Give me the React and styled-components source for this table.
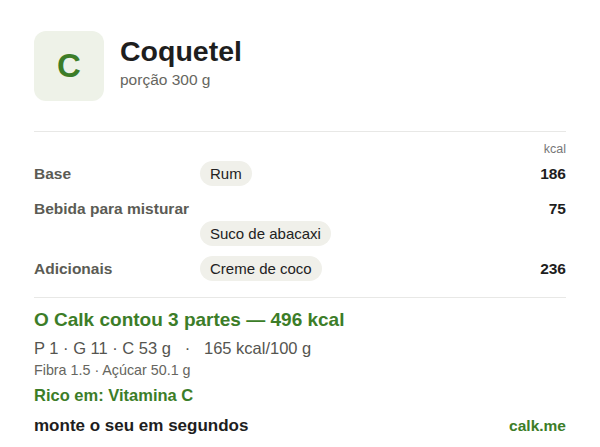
import React from 'react'
import styled, { createGlobalStyle } from 'styled-components';

const Global = createGlobalStyle`
    body {
        margin: 0;
        background: #ffffff;
        font-family: "Liberation Sans", Arial, sans-serif;
    }
`
const Card = styled.div`
    width: 600px;
    height: 447px;
    box-sizing: border-box;
    padding: 31px 34px 0 34px;
    overflow: hidden;
`
const Header = styled.div`
    display: flex;
    align-items: center;
    gap: 16px;
    padding-bottom: 30px;
    border-bottom: 1px solid #e8e8e6;
`
const Avatar = styled.div`
    width: 70px;
    height: 70px;
    border-radius: 12px;
    background: #eef2e8;
    color: #3c7d28;
    font-size: 33px;
    font-weight: bold;
    display: flex;
    align-items: center;
    justify-content: center;
`
const TitleBox = styled.div`
    display: flex;
    flex-direction: column;
    margin-top: -8px;
`
const Title = styled.div`
    font-size: 28.5px;
    font-weight: bold;
    color: #1e1e1e;
    line-height: 32px;
`
const Subtitle = styled.div`
    font-size: 15.5px;
    color: #666660;
    line-height: 18px;
    margin-top: 4px;
`
const Table = styled.div`
    display: flex;
    flex-direction: column;
    gap: 10px;
    padding: 10px 0 16px 0;
    border-bottom: 1px solid #e8e8e6;
`
const UnitHead = styled.div`
    text-align: right;
    font-size: 12.5px;
    color: #777;
    line-height: 14px;
    margin-bottom: -5px;
`
const Group = styled.div`
    display: flex;
    flex-direction: column;
`
const Row = styled.div`
    display: grid;
    grid-template-columns: 166px 1fr auto;
    align-items: center;
    height: 25px;
`
const Label = styled.div`
    font-size: 15.5px;
    font-weight: bold;
    color: #5b5b54;
`
const Chip = styled.span`
    justify-self: start;
    background: #f0f0ea;
    color: #222;
    font-size: 15px;
    height: 25px;
    line-height: 25px;
    padding: 0 10px;
    border-radius: 13px;
`
const Value = styled.div`
    font-size: 15.5px;
    font-weight: bold;
    color: #1e1e1e;
`
const Summary = styled.div`
    padding-top: 10px;
    display: flex;
    flex-direction: column;
`
const Total = styled.div`
    font-size: 19px;
    font-weight: bold;
    color: #3c7d28;
    line-height: 23px;
`
const Macros = styled.div`
    font-size: 16.5px;
    color: #555550;
    line-height: 20px;
    margin-top: 7px;
    white-space: pre;
`
const Extra = styled.div`
    font-size: 14.3px;
    color: #666660;
    line-height: 16px;
    margin-top: 4px;
`
const Rich = styled.div`
    font-size: 16.5px;
    font-weight: bold;
    color: #3c7d28;
    line-height: 20px;
    margin-top: 7px;
`
const Footer = styled.div`
    display: flex;
    justify-content: space-between;
    align-items: center;
    line-height: 20px;
    margin-top: 11px;
`
const Cta = styled.div`
    font-size: 17px;
    font-weight: bold;
    color: #1e1e1e;
`
const Brand = styled.div`
    font-size: 15.5px;
    font-weight: bold;
    color: #3c7d28;
`

const rows = [
  { label: 'Base', items: ['Rum'], kcal: 186 },
  { label: 'Bebida para misturar', items: ['Suco de abacaxi'], kcal: 75, wrap: true },
  { label: 'Adicionais', items: ['Creme de coco'], kcal: 236 },
]

function App() {
  return (
    <Card>
        <Global />
        <Header>
            <Avatar>C</Avatar>
            <TitleBox>
                <Title>Coquetel</Title>
                <Subtitle>porção 300 g</Subtitle>
            </TitleBox>
        </Header>
        <Table>
            <UnitHead>kcal</UnitHead>
            {rows.map(r => (
              <Group key={r.label}>
                  <Row>
                      <Label>{r.label}</Label>
                      {r.wrap ? <span /> : <Chip>{r.items[0]}</Chip>}
                      <Value>{r.kcal}</Value>
                  </Row>
                  {r.wrap && (
                    <Row>
                        <span />
                        <Chip>{r.items[0]}</Chip>
                        <span />
                    </Row>
                  )}
              </Group>
            ))}
        </Table>
        <Summary>
            <Total>O Calk contou 3 partes — 496 kcal</Total>
            <Macros>{'P 1 · G 11 · C 53 g   ·   165 kcal/100 g'}</Macros>
            <Extra>Fibra 1.5 · Açúcar 50.1 g</Extra>
            <Rich>Rico em: Vitamina C</Rich>
            <Footer>
                <Cta>monte o seu em segundos</Cta>
                <Brand>calk.me</Brand>
            </Footer>
        </Summary>
    </Card>
  )
}

export default App
